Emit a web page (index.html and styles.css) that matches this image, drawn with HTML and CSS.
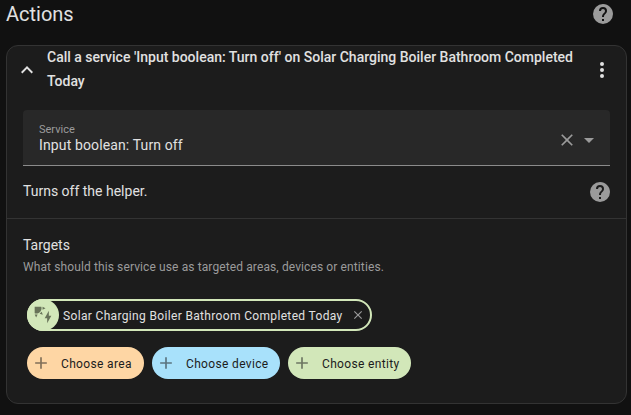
FILE: index.html
```html
<!DOCTYPE html>
<html lang="en">
<head>
<meta charset="utf-8">
<title>Actions</title>
<link rel="stylesheet" href="styles.css">
</head>
<body>
<header class="page-header">
  <h1>Actions</h1>
  <svg class="icon help" viewBox="0 0 24 24"><path d="M15.07,11.25L14.17,12.17C13.45,12.89 13,13.5 13,15H11V14.5C11,13.39 11.45,12.39 12.17,11.67L13.41,10.41C13.78,10.05 14,9.55 14,9C14,7.89 13.1,7 12,7A2,2 0 0,0 10,9H8A4,4 0 0,1 12,5A4,4 0 0,1 16,9C16,9.88 15.64,10.67 15.07,11.25M13,19H11V17H13M12,2A10,10 0 0,0 2,12A10,10 0 0,0 12,22A10,10 0 0,0 22,12C22,6.47 17.5,2 12,2Z"/></svg>
</header>
<main class="card">
  <div class="card-header">
    <svg class="icon" viewBox="0 0 24 24"><path d="M7.41,15.41L12,10.83L16.59,15.41L18,14L12,8L6,14L7.41,15.41Z"/></svg>
    <h2>Call a service 'Input boolean: Turn off' on Solar Charging Boiler Bathroom Completed Today</h2>
    <svg class="icon" viewBox="0 0 24 24"><path d="M12,16A2,2 0 0,1 14,18A2,2 0 0,1 12,20A2,2 0 0,1 10,18A2,2 0 0,1 12,16M12,10A2,2 0 0,1 14,12A2,2 0 0,1 12,14A2,2 0 0,1 10,12A2,2 0 0,1 12,10M12,4A2,2 0 0,1 14,6A2,2 0 0,1 12,8A2,2 0 0,1 10,6A2,2 0 0,1 12,4Z"/></svg>
  </div>
  <div class="field">
    <div class="field-text">
      <span class="field-label">Service</span>
      <span class="field-value">Input boolean: Turn off</span>
    </div>
    <svg class="icon clear" viewBox="0 0 24 24"><path d="M19,6.41L17.59,5L12,10.59L6.41,5L5,6.41L10.59,12L5,17.59L6.41,19L12,13.41L17.59,19L19,17.59L13.41,12L19,6.41Z"/></svg>
    <svg class="icon arrow" viewBox="0 0 24 24"><path d="M7,10L12,15L17,10H7Z"/></svg>
  </div>
  <div class="description">
    <span>Turns off the helper.</span>
    <svg class="icon help" viewBox="0 0 24 24"><path d="M15.07,11.25L14.17,12.17C13.45,12.89 13,13.5 13,15H11V14.5C11,13.39 11.45,12.39 12.17,11.67L13.41,10.41C13.78,10.05 14,9.55 14,9C14,7.89 13.1,7 12,7A2,2 0 0,0 10,9H8A4,4 0 0,1 12,5A4,4 0 0,1 16,9C16,9.88 15.64,10.67 15.07,11.25M13,19H11V17H13M12,2A10,10 0 0,0 2,12A10,10 0 0,0 12,22A10,10 0 0,0 22,12C22,6.47 17.5,2 12,2Z"/></svg>
  </div>
  <section class="targets">
    <h3>Targets</h3>
    <p>What should this service use as targeted areas, devices or entities.</p>
    <div class="chips">
      <div class="chip selected">
        <span class="chip-icon"><svg viewBox="0 0 24 24"><path d="M11.45,2V5.55L15,3.77L11.45,2M10.45,8L8,10.46L11.75,11.71L10.45,8M2,11.45L3.77,15L5.55,11.45H2M10,2H2V10C2.57,10.17 3.17,10.25 3.77,10.25C7.35,10.26 10.26,7.35 10.27,3.75C10.26,3.16 10.17,2.57 10,2M17,22V16H14L19,7V13H22L17,22Z"/></svg></span>
        <span class="chip-label">Solar Charging Boiler Bathroom Completed Today</span>
        <svg class="remove" viewBox="0 0 24 24"><path d="M19,6.41L17.59,5L12,10.59L6.41,5L5,6.41L10.59,12L5,17.59L6.41,19L12,13.41L17.59,19L19,17.59L13.41,12L19,6.41Z"/></svg>
      </div>
    </div>
    <div class="chips add">
      <div class="chip area"><svg class="plus" viewBox="0 0 24 24"><path d="M19,13H13V19H11V13H5V11H11V5H13V11H19V13Z"/></svg><span class="chip-text">Choose area</span></div>
      <div class="chip device"><svg class="plus" viewBox="0 0 24 24"><path d="M19,13H13V19H11V13H5V11H11V5H13V11H19V13Z"/></svg><span class="chip-text">Choose device</span></div>
      <div class="chip entity"><svg class="plus" viewBox="0 0 24 24"><path d="M19,13H13V19H11V13H5V11H11V5H13V11H19V13Z"/></svg><span class="chip-text">Choose entity</span></div>
    </div>
  </section>
</main>
</body>
</html>
```
FILE: styles.css
```css
* { box-sizing: border-box; }
body {
  margin: 0;
  height: 415px;
  overflow: hidden;
  background: #111;
  color: #e1e1e1;
  font-family: Roboto, sans-serif;
  font-size: 14px;
}
h1, h2, h3, p { margin: 0; }
svg { display: block; flex: none; fill: currentColor; }
.icon { width: 24px; height: 24px; }
.help { color: #9b9b9b; }
.page-header {
  display: flex;
  justify-content: space-between;
  height: 45px;
  padding: 2px 16px 0 6px;
}
h1 { font-size: 20px; font-weight: 400; line-height: 24px; }
.card {
  width: 621px;
  height: 359px;
  margin-left: 6px;
  border: 1px solid #333;
  border-radius: 12px;
  background: #1c1c1c;
}
.card-header {
  display: flex;
  align-items: center;
  height: 48px;
  padding: 0 12px 0 8px;
}
h2 {
  flex: 1;
  margin: -2px 8px 0;
  font-size: 14px;
  font-weight: 500;
  line-height: 24px;
}
.field {
  display: flex;
  align-items: center;
  height: 56px;
  margin: 16px 16px 0;
  padding: 0 9px 0 16px;
  border-bottom: 1px solid #8b8b8b;
  border-radius: 4px 4px 0 0;
  background: #282828;
}
.field-text { display: flex; flex: 1; flex-direction: column; }
.field-label { padding-top: 1px; color: #9b9b9b; font-size: 11px; line-height: 14px; }
.field-value { font-size: 14px; line-height: 17px; letter-spacing: 0.13px; }
.clear { width: 20px; height: 20px; }
.field .icon { margin-top: 4px; color: #9b9b9b; }
.description {
  display: flex;
  align-items: center;
  justify-content: space-between;
  height: 53px;
  padding: 0 14px 0 16px;
  border-bottom: 1px solid #333;
}
.description span { padding-bottom: 2px; }
.targets { padding: 16px; }
h3 { font-size: 14px; font-weight: 400; line-height: 21px; }
.targets p { color: #9b9b9b; font-size: 12px; line-height: 22px; letter-spacing: 0.11px; }
.chips { display: flex; gap: 8px; margin: 21px 4px 0; }
.chips.add { margin-top: 16px; }
.chip {
  display: flex;
  align-items: center;
  height: 32px;
  border-radius: 16px;
  font-size: 12px;
  letter-spacing: 0.34px;
  white-space: nowrap;
}
.selected { width: 345px; border: 2px solid #d2e7b9; }
.chip-icon {
  display: flex;
  flex: none;
  align-items: center;
  justify-content: center;
  width: 32px;
  height: 32px;
  margin-left: -2px;
  border-radius: 50%;
  background: #d2e7b9;
  color: #687359;
}
.chip-icon svg { width: 20px; height: 20px; }
.chip-label, .chip-text { padding-top: 2px; }
.chip-label { flex: 1; margin-left: 4px; }
.remove { width: 14px; height: 14px; margin-right: 5px; color: #9b9b9b; }
.plus { width: 20px; height: 20px; margin: 0 10px 0 4px; opacity: 0.55; }
.area, .device, .entity { color: #1c1c1c; }
.area { width: 117px; background: #fed6a4; }
.device { width: 128px; background: #a8e1fb; }
.entity { width: 123px; background: #d2e7b9; }
```
